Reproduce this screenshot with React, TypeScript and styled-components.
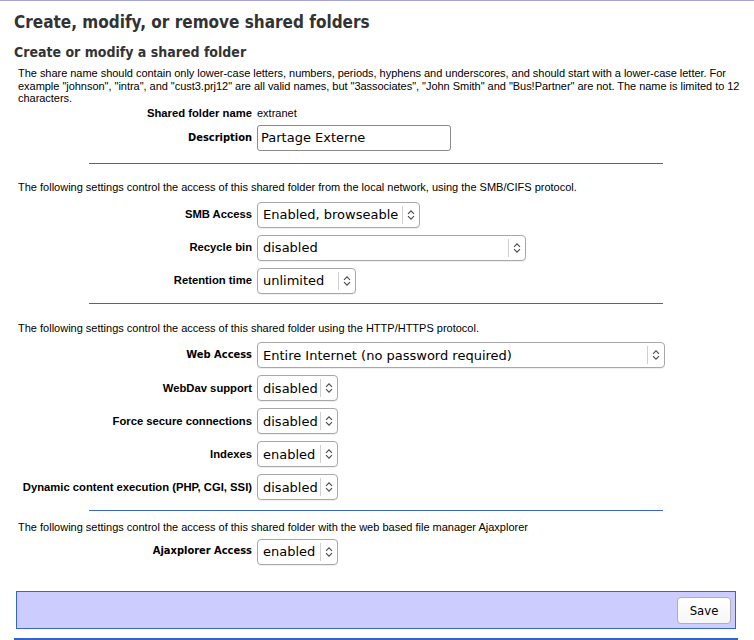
import { FC } from 'react';
import styled, { createGlobalStyle } from 'styled-components';

const GlobalStyle = createGlobalStyle`
  body {
    margin: 0;
    background: #fff;
    color: #000;
    font-family: "Liberation Sans", Arial, sans-serif;
    font-size: 11px;
  }
`;

type Choice = { label: string; value: string; width: number; alt?: boolean };

const smbChoices: Choice[] = [
  { label: 'SMB Access', value: 'Enabled, browseable', width: 163 },
  { label: 'Recycle bin', value: 'disabled', width: 269 },
  { label: 'Retention time', value: 'unlimited', width: 99 },
];

const webChoices: Choice[] = [
  { label: 'Web Access', value: 'Entire Internet (no password required)', width: 408, alt: true },
  { label: 'WebDav support', value: 'disabled', width: 81 },
  { label: 'Force secure connections', value: 'disabled', width: 81 },
  { label: 'Indexes', value: 'enabled', width: 81 },
  { label: 'Dynamic content execution (PHP, CGI, SSI)', value: 'disabled', width: 81 },
];

const ajaxChoices: Choice[] = [
  { label: 'Ajaxplorer Access', value: 'enabled', width: 81, alt: true },
];

const Chevrons: FC = () => (
  <svg width="8" height="12" viewBox="0 0 8 12" fill="none" stroke="#4a4a4a" strokeWidth="1.1">
    <path d="M1 4.8 L4 1.8 L7 4.8" />
    <path d="M1 7.2 L4 10.2 L7 7.2" />
  </svg>
);

const DropDown: FC<{ choice: Choice }> = ({ choice }) => (
  <SelectBox $width={choice.width}>
    <NativeSelect defaultValue={choice.value}>
      <option>{choice.value}</option>
    </NativeSelect>
    <ArrowPart><Chevrons /></ArrowPart>
  </SelectBox>
);

const ChoiceRows: FC<{ items: Choice[] }> = ({ items }) => (
  <FieldList $gap={7}>
    {items.map((c) => (
      <Field key={c.label}>
        <Label $alt={c.alt}>{c.label}</Label>
        <div><DropDown choice={c} /></div>
      </Field>
    ))}
  </FieldList>
);

const App: FC = () => {
  return (
    <Page>
      <GlobalStyle />
      <Title>Create, modify, or remove shared folders</Title>
      <Subtitle>Create or modify a shared folder</Subtitle>
      <Intro>
        The share name should contain only lower-case letters, numbers, periods, hyphens and underscores, and should
        start with a lower-case letter. For example "johnson", "intra", and "cust3.prj12" are all valid names, but
        "3associates", "John Smith" and "Bus!Partner" are not. The name is limited to 12 characters.
      </Intro>

      <FieldList $gap={5} $top={2}>
        <Field>
          <Label>Shared folder name</Label>
          <span>extranet</span>
        </Field>
        <Field>
          <Label $alt>Description</Label>
          <div><TextInput defaultValue="Partage Externe" /></div>
        </Field>
      </FieldList>

      <Rule $top={12} />
      <Note $top={17} $bottom={8}>
        The following settings control the access of this shared folder from the local network, using the SMB/CIFS protocol.
      </Note>
      <ChoiceRows items={smbChoices} />

      <Rule $top={9} />
      <Note $top={18} $bottom={8}>
        The following settings control the access of this shared folder using the HTTP/HTTPS protocol.
      </Note>
      <ChoiceRows items={webChoices} />

      <Rule $top={10} />
      <Note $top={10} $bottom={5}>
        The following settings control the access of this shared folder with the web based file manager Ajaxplorer
      </Note>
      <ChoiceRows items={ajaxChoices} />

      <ActionBar>
        <SaveButton type="button">Save</SaveButton>
      </ActionBar>
      <BottomRule />
    </Page>
  );
};

export default App;

const Page = styled.div`
  border-top: 1px solid #a4a4d8;
  padding: 0 16px 0 14px;
  height: 639px;
  overflow: hidden;
`;

const Title = styled.h1`
  margin: 11px 0 0;
  font-family: "DejaVu Sans Condensed", "DejaVu Sans", sans-serif;
  font-stretch: condensed;
  font-weight: bold;
  font-size: 17px;
  line-height: 20px;
  color: #333;
`;

const Subtitle = styled.h2`
  margin: 12px 0 0;
  font-family: "DejaVu Sans Condensed", "DejaVu Sans", sans-serif;
  font-stretch: condensed;
  font-weight: bold;
  font-size: 14px;
  line-height: 17px;
  color: #333;
`;

const Intro = styled.p`
  margin: 6px -10px 0 0;
  padding-left: 4px;
  line-height: 1.15;
  letter-spacing: -0.03px;
`;

const Note = styled.p<{ $top: number; $bottom: number }>`
  margin: ${(p) => p.$top}px 0 ${(p) => p.$bottom}px;
  padding-left: 4px;
  line-height: 1.15;
`;

const FieldList = styled.div<{ $gap: number; $top?: number }>`
  display: flex;
  flex-direction: column;
  gap: ${(p) => p.$gap}px;
  margin-top: ${(p) => p.$top ?? 0}px;
`;

const Field = styled.div`
  display: grid;
  grid-template-columns: 238px 1fr;
  column-gap: 5px;
  align-items: center;
  line-height: 1.15;
`;

const Label = styled.span<{ $alt?: boolean }>`
  text-align: right;
  font-weight: bold;
  font-size: ${(p) => (p.$alt ? '11px' : '11.25px')};
  font-family: ${(p) =>
    p.$alt ? '"DejaVu Sans Condensed", "DejaVu Sans", sans-serif' : '"Liberation Sans", Arial, sans-serif'};
  font-stretch: ${(p) => (p.$alt ? 'condensed' : 'normal')};
`;

const TextInput = styled.input`
  box-sizing: border-box;
  width: 194px;
  height: 26px;
  margin: 0;
  padding: 0 3px;
  border: 1px solid #8a8a8a;
  border-radius: 3px;
  background: #fff;
  font-family: "DejaVu Sans", sans-serif;
  font-size: 13px;
  color: #000;
  outline: none;
`;

const SelectBox = styled.div<{ $width: number }>`
  box-sizing: border-box;
  display: flex;
  align-items: stretch;
  width: ${(p) => p.$width}px;
  height: 26px;
  border: 1px solid #a8a8a8;
  border-radius: 4px;
  background: #fff;
  box-shadow: 0 1px 0 rgba(0, 0, 0, 0.06);
`;

const NativeSelect = styled.select`
  appearance: none;
  flex: 1;
  min-width: 0;
  margin: 0;
  padding: 0 0 0 5px;
  border: none;
  background: transparent;
  font-family: "DejaVu Sans", sans-serif;
  font-size: 13px;
  color: #000;
  outline: none;
`;

const ArrowPart = styled.span`
  display: flex;
  align-items: center;
  justify-content: center;
  width: 16px;
  margin: 3px 0;
  border-left: 1px solid #d0d0d0;
`;

const Rule = styled.div<{ $top: number }>`
  width: 574px;
  height: 1px;
  margin: ${(p) => p.$top}px auto 0;
  background: #3a66c4;
`;

const ActionBar = styled.div`
  display: flex;
  justify-content: flex-end;
  align-items: center;
  height: 36px;
  margin: 26px 2px 0;
  padding: 0 4px;
  border: 1px solid #3366cc;
  background: #ccccff;
`;

const SaveButton = styled.button`
  box-sizing: border-box;
  width: 54px;
  height: 27px;
  margin-top: 1px;
  padding: 0;
  border: 1px solid #b0b0b0;
  border-radius: 4px;
  background: linear-gradient(#ffffff, #f6f6f6);
  font-family: "DejaVu Sans Condensed", "DejaVu Sans", sans-serif;
  font-stretch: condensed;
  font-size: 13px;
  color: #000;
`;

const BottomRule = styled.div`
  height: 2px;
  margin-top: 9px;
  background: #3366cc;
`;
